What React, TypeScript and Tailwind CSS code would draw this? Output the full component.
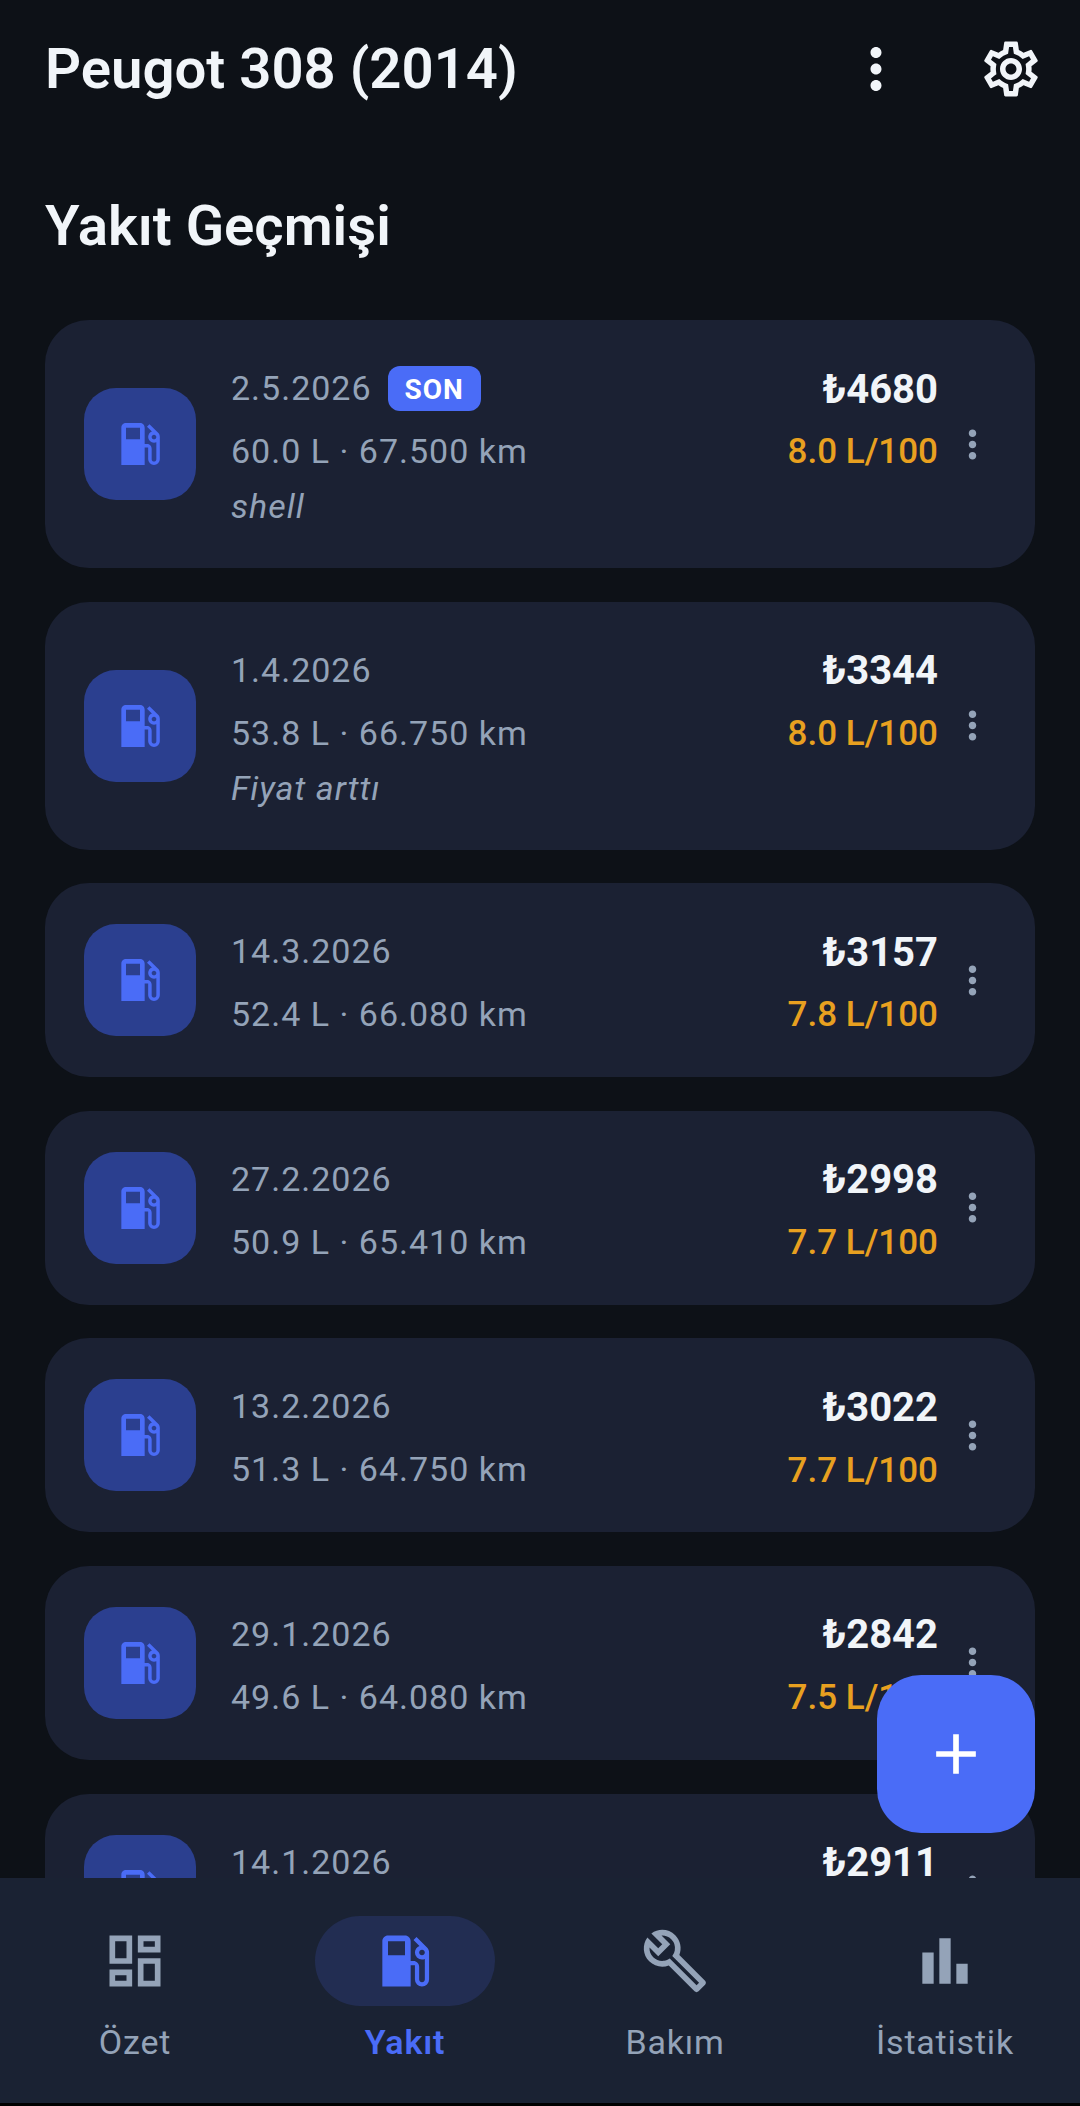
import { MdAdd, MdBarChart, MdLocalGasStation, MdMoreVert, MdOutlineBuild, MdOutlineDashboard, MdOutlineSettings } from 'react-icons/md';

type Fill = { date: string; detail: string; price: string; usage: string; note?: string; latest?: boolean };

const FILLS: Fill[] = [
  { date: '2.5.2026', detail: '60.0 L · 67.500 km', price: '₺4680', usage: '8.0 L/100', note: 'shell', latest: true },
  { date: '1.4.2026', detail: '53.8 L · 66.750 km', price: '₺3344', usage: '8.0 L/100', note: 'Fiyat arttı' },
  { date: '14.3.2026', detail: '52.4 L · 66.080 km', price: '₺3157', usage: '7.8 L/100' },
  { date: '27.2.2026', detail: '50.9 L · 65.410 km', price: '₺2998', usage: '7.7 L/100' },
  { date: '13.2.2026', detail: '51.3 L · 64.750 km', price: '₺3022', usage: '7.7 L/100' },
  { date: '29.1.2026', detail: '49.6 L · 64.080 km', price: '₺2842', usage: '7.5 L/100' },
  { date: '14.1.2026', detail: '48.2 L · 63.420 km', price: '₺2911', usage: '7.5 L/100' },
];

function FillCard({ fill }: { fill: Fill }) {
  return (
    <div className="flex shrink-0 items-center rounded-[44px] bg-[#1b2133] pb-[37px] pl-[39px] pr-[40px] pt-[40px]">
      <div className="-mt-[3px] flex h-[112px] w-[112px] shrink-0 items-center justify-center rounded-[32px] bg-[#2b3f8f]">
        <MdLocalGasStation size={56} className="text-[#4a6cf7]" />
      </div>
      <div className="ml-[35px] flex-1 text-[#94a3b8]">
        <div className="flex h-[54px] items-center pt-[3px] text-[34px] tracking-[1px]">
          {fill.date}
          {fill.latest && (
            <span className="ml-[16px] flex h-[45px] w-[93px] items-center justify-center rounded-[12px] bg-[#4a6cf7] pt-[2px] text-[28px] font-bold tracking-[1px] text-white">
              SON
            </span>
          )}
        </div>
        <div className="mt-[9px] flex h-[54px] items-center pt-[3px] text-[34px] tracking-[1px]">{fill.detail}</div>
        {fill.note && <div className="mb-[4px] mt-[6px] flex h-[44px] items-center pt-[3px] text-[34px] italic tracking-[1px]">{fill.note}</div>}
      </div>
      <div className="self-start text-right">
        <div className="flex h-[54px] items-center justify-end pt-[5px] text-[40px] font-bold text-[#f1f5f9]">{fill.price}</div>
        <div className="mt-[9px] flex h-[54px] items-center justify-end pt-[5px] text-[35px] font-medium text-[#e8a020]">{fill.usage}</div>
      </div>
      <MdMoreVert size={45} className="-mt-[3px] ml-[12px] text-[#94a3b8]" />
    </div>
  );
}

function NavItem({ label, active, children }: { label: string; active?: boolean; children: React.ReactNode }) {
  return (
    <div className="flex flex-1 flex-col items-center pt-[38px]">
      <div className={`flex h-[90px] w-[180px] items-center justify-center rounded-full ${active ? 'bg-[#222d52] text-[#4a6cf7]' : 'text-[#94a3b8]'}`}>
        {children}
      </div>
      <span className={`mt-[14px] text-[34px] leading-[44px] tracking-[0.8px] ${active ? 'font-semibold text-[#4a6cf7]' : 'text-[#94a3b8]'}`}>{label}</span>
    </div>
  );
}

export default function App() {
  return (
    <div className="relative flex h-[2106px] w-[1080px] flex-col overflow-hidden bg-[#0d1117] font-['Roboto',sans-serif]">
      <main className="flex min-h-0 flex-1 flex-col overflow-hidden px-[45px]">
        <header className="flex h-[138px] shrink-0 items-center justify-between">
          <h1 className="text-[56.3px] font-semibold text-[#f1f5f9]">Peugot 308 (2014)</h1>
          <div className="flex items-center text-[#f1f5f9]">
            <MdMoreVert size={66} />
            <MdOutlineSettings size={66} className="ml-[69px] mr-[-9px]" />
          </div>
        </header>
        <h2 className="mt-[53px] shrink-0 text-[56.3px] font-semibold leading-[70px] text-[#f1f5f9]">Yakıt Geçmişi</h2>
        <div className="mt-[59px] flex flex-col gap-[33.6px]">
          {FILLS.map((fill) => (
            <FillCard key={fill.date} fill={fill} />
          ))}
        </div>
      </main>

      <nav className="z-10 flex h-[225px] shrink-0 bg-[#1a2233]">
        <NavItem label="Özet">
          <MdOutlineDashboard size={68} />
        </NavItem>
        <NavItem label="Yakıt" active>
          <MdLocalGasStation size={68} />
        </NavItem>
        <NavItem label="Bakım">
          <MdOutlineBuild size={68} />
        </NavItem>
        <NavItem label="İstatistik">
          <MdBarChart size={68} />
        </NavItem>
      </nav>
      <div className="h-[3px] shrink-0 bg-black" />

      <button className="absolute left-[877px] top-[1675px] z-20 flex h-[158px] w-[158px] items-center justify-center rounded-[44px] bg-[#4a6cf7] text-white">
        <MdAdd size={68} />
      </button>
    </div>
  );
}
